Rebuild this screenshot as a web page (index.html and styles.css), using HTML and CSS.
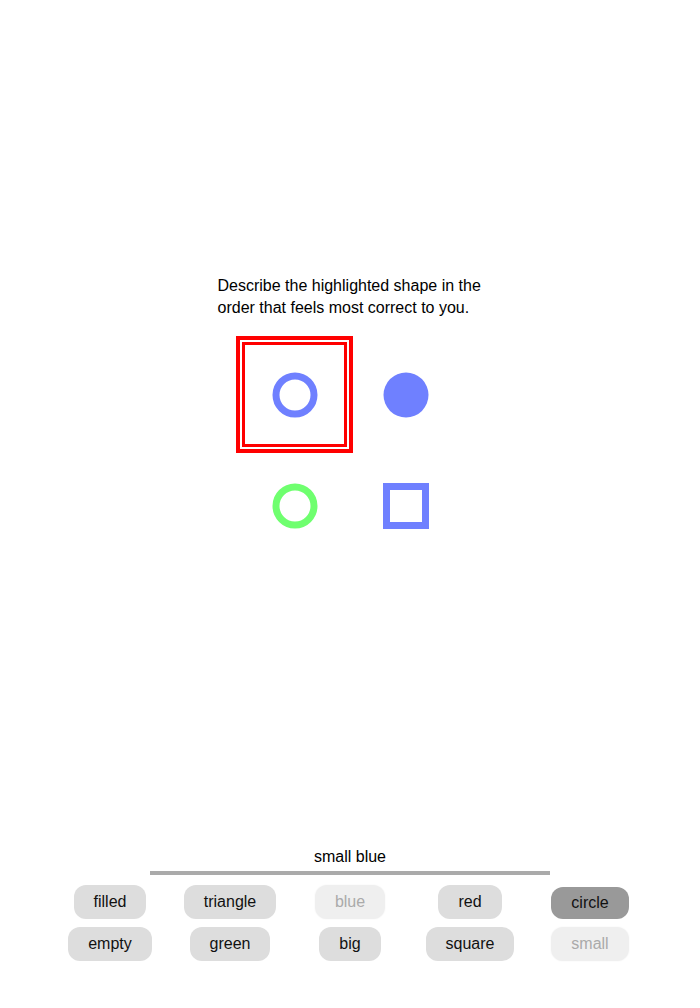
FILE: index.html
```html
<!DOCTYPE html>
<html>
<head>
<meta charset="utf-8">
<link rel="stylesheet" href="styles.css">
</head>
<body>
<div class="page">
  <p class="prompt">Describe the highlighted shape in the order that feels most correct to you.</p>
  <div class="shapes">
    <div class="cell highlighted">
      <svg width="46" height="46" viewBox="0 0 46 46"><circle cx="23" cy="23" r="19" fill="none" stroke="#6f80ff" stroke-width="7"/></svg>
    </div>
    <div class="cell">
      <svg width="46" height="46" viewBox="0 0 46 46"><circle cx="23" cy="23" r="22.5" fill="#6f80ff"/></svg>
    </div>
    <div class="cell">
      <svg width="46" height="46" viewBox="0 0 46 46"><circle cx="23" cy="23" r="19" fill="none" stroke="#6fff6f" stroke-width="7"/></svg>
    </div>
    <div class="cell">
      <svg width="46" height="46" viewBox="0 0 46 46"><rect x="3.5" y="3.5" width="39" height="39" fill="none" stroke="#6f80ff" stroke-width="7"/></svg>
    </div>
  </div>
  <div class="footer">
    <div class="answer">small blue</div>
    <div class="bar"></div>
    <div class="chips">
      <div class="slot"><span class="chip">filled</span></div>
      <div class="slot"><span class="chip">triangle</span></div>
      <div class="slot"><span class="chip used">blue</span></div>
      <div class="slot"><span class="chip">red</span></div>
      <div class="slot"><span class="chip active">circle</span></div>
      <div class="slot"><span class="chip">empty</span></div>
      <div class="slot"><span class="chip">green</span></div>
      <div class="slot"><span class="chip">big</span></div>
      <div class="slot"><span class="chip">square</span></div>
      <div class="slot"><span class="chip used">small</span></div>
    </div>
  </div>
</div>
</body>
</html>
```

FILE: styles.css
```css
html, body {
  margin: 0;
  padding: 0;
  background: #fff;
}
body {
  font-family: "Liberation Sans", Arial, sans-serif;
  font-size: 16px;
  color: #000;
}
.page {
  height: 1008px;
  display: flex;
  flex-direction: column;
  align-items: center;
  box-sizing: border-box;
  padding-top: 275px;
  padding-bottom: 47px;
}
.prompt {
  margin: 0;
  width: 265px;
  line-height: 22px;
  text-align: left;
}
.shapes {
  margin-top: 23px;
  display: grid;
  grid-template-columns: 105px 105px;
  grid-template-rows: 105px 105px;
  gap: 6px;
}
.cell {
  box-sizing: border-box;
  border: 3px solid transparent;
  display: flex;
  align-items: center;
  justify-content: center;
}
.cell svg {
  display: block;
}
.highlighted {
  border-color: #ff0000;
  outline: 4px solid #ff0000;
  outline-offset: 2px;
}
.footer {
  margin-top: auto;
  display: flex;
  flex-direction: column;
  align-items: center;
}
.answer {
  line-height: 18px;
}
.bar {
  margin-top: 5px;
  width: 400px;
  height: 4px;
  background: #aaaaaa;
}
.chips {
  margin-top: 10px;
  display: grid;
  grid-template-columns: repeat(5, 120px);
  row-gap: 8px;
}
.slot {
  display: flex;
  justify-content: center;
  align-items: flex-start;
}
.chip {
  display: inline-flex;
  align-items: center;
  height: 34px;
  padding: 0 20px;
  border-radius: 12px;
  background: #dddddd;
  color: #111;
  box-sizing: border-box;
}
.chip.used {
  background: #efefef;
  color: #aaaaaa;
  box-shadow: 0 0 2px rgba(0, 0, 0, 0.06);
}
.chip.active {
  background: #999999;
  color: #111;
  height: 32px;
  margin-top: 2px;
}
```
